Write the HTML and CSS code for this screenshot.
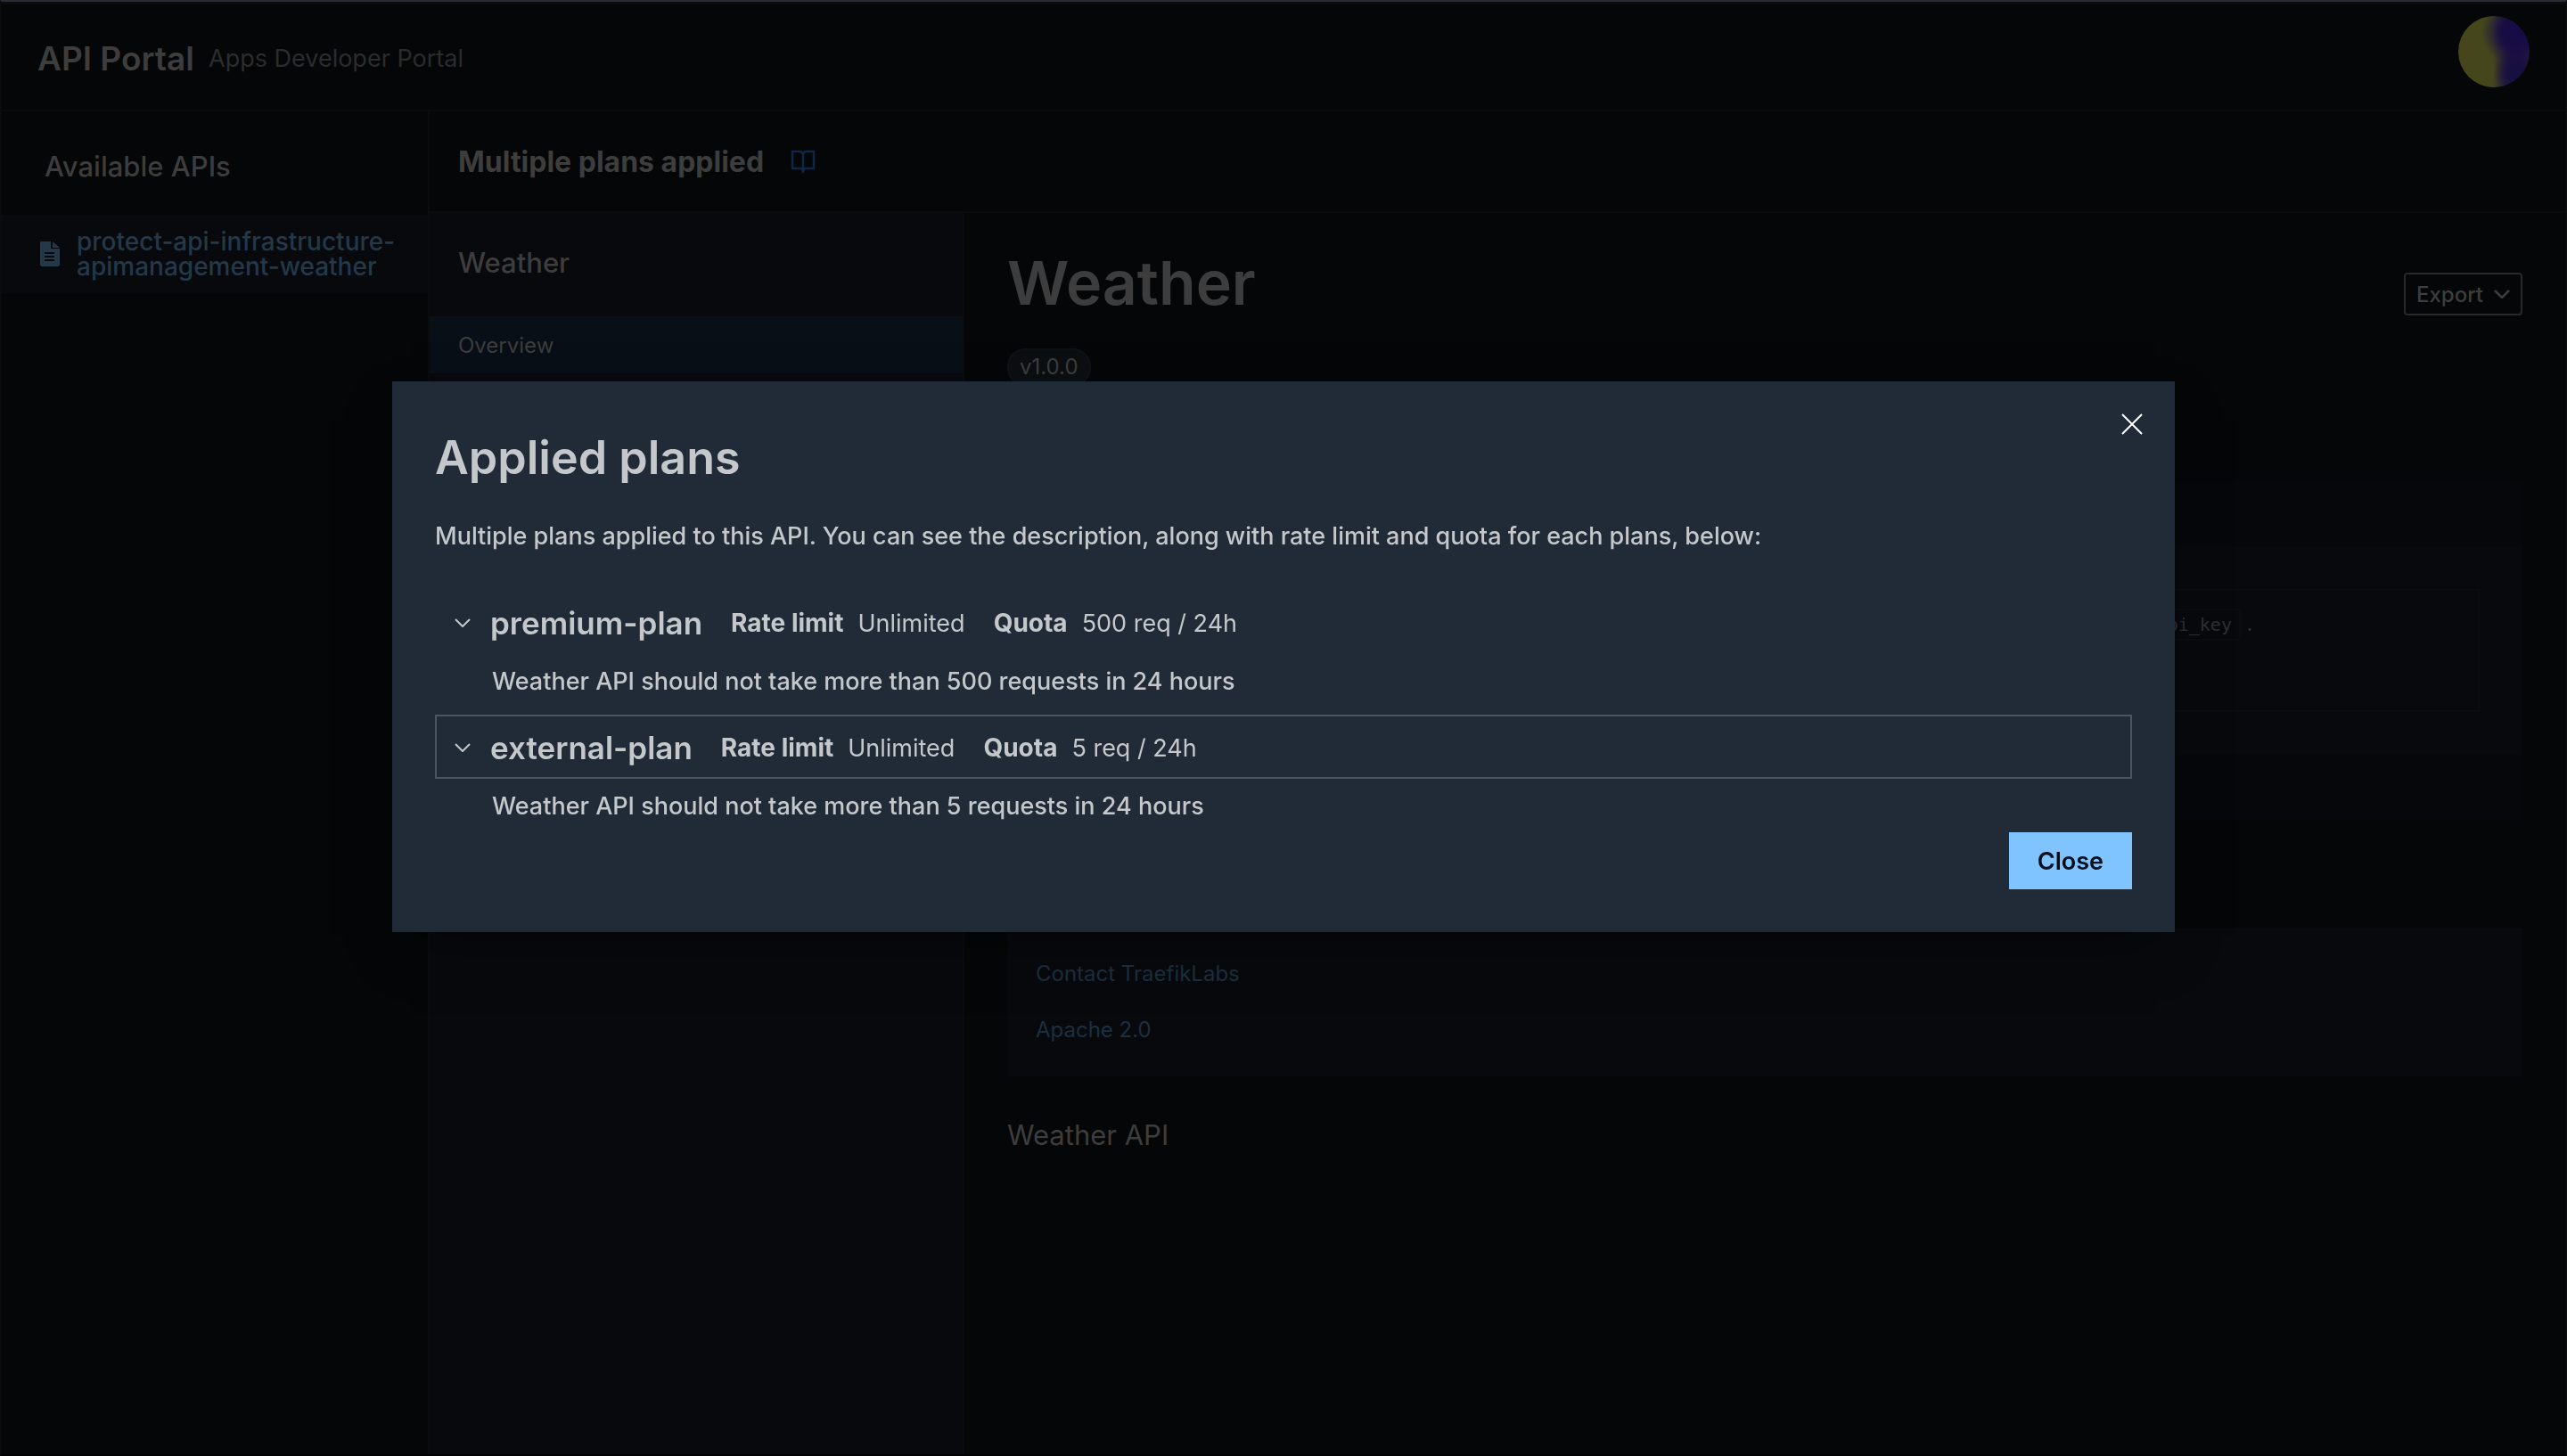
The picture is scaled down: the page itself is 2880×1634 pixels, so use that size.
FILE: index.html
```html
<!DOCTYPE html>
<html lang="en">
<head>
<meta charset="utf-8">
<title>API Portal</title>
<link rel="stylesheet" href="styles.css">
</head>
<body>
<div class="portal">
  <header class="topbar">
    <h1 class="brand">API Portal</h1>
    <p class="tagline">Apps Developer Portal</p>
    <button class="avatar" type="button" aria-label="Account"></button>
  </header>
  <div class="body">
    <nav class="apis" aria-label="Available APIs">
      <h2 class="apis-title">Available APIs</h2>
      <a class="api-link" href="#weather">
        <svg class="file-icon" viewBox="0 0 24 28" aria-hidden="true"><path fill="currentColor" fill-rule="evenodd" d="M2 0H13V8H23V26Q23 28 21 28H3Q1 28 1 26V1Q1 0 2 0ZM15 0L23 7H15ZM6 12V14H17V12ZM6 16V18H17V16ZM6 20V22H17V20Z"/></svg>
        <span>protect-api-infrastructure-apimanagement-weather</span>
      </a>
    </nav>
    <div class="content">
      <div class="planbar">
        <h2 class="planbar-title">Multiple plans applied</h2>
        <button class="book-button" type="button" aria-label="Show plans">
          <svg class="book-icon" viewBox="0 0 28 28" aria-hidden="true"><path d="M14 6Q13 3 10 3H2V22H11Q14 22 14 26Q14 22 17 22H26V3H18Q15 3 14 6V24" fill="none" stroke="currentColor" stroke-width="2.5" stroke-linejoin="round"/></svg>
        </button>
      </div>
      <div class="docs">
        <nav class="toc" aria-label="Weather">
          <h3 class="toc-title">Weather</h3>
          <a class="toc-link" href="#overview">Overview</a>
        </nav>
        <main class="doc" id="weather">
          <div class="doc-head">
            <h2 class="doc-title">Weather</h2>
            <button class="export" type="button">Export
              <svg class="export-icon" viewBox="0 0 18 10" aria-hidden="true"><path d="M1 1L9 9L17 1" fill="none" stroke="currentColor" stroke-width="2.5"/></svg>
            </button>
          </div>
          <span class="version">v1.0.0</span>
          <section class="security">
            <div class="security-body">
              <div class="security-box"><code>api_key</code>.</div>
            </div>
          </section>
          <section class="links">
            <a href="#contact">Contact TraefikLabs</a>
            <a href="#license">Apache 2.0</a>
          </section>
          <p class="summary">Weather API</p>
        </main>
      </div>
    </div>
  </div>
</div>
<div class="overlay">
  <section class="dialog" role="dialog" aria-modal="true" aria-labelledby="dialog-title">
    <button class="dismiss" type="button" aria-label="Dismiss">
      <svg class="dismiss-icon" viewBox="0 0 24 24" aria-hidden="true"><path d="M1 1L23 23M23 1L1 23" fill="none" stroke="currentColor" stroke-width="2"/></svg>
    </button>
    <h2 class="dialog-title" id="dialog-title">Applied plans</h2>
    <p class="intro">Multiple plans applied to this API. You can see the description, along with rate limit and quota for each plans, below:</p>
    <button class="plan" type="button" aria-expanded="true">
      <svg class="chevron" viewBox="0 0 18 10" aria-hidden="true"><path d="M1 1L9 9L17 1" fill="none" stroke="currentColor" stroke-width="2"/></svg>
      <span class="plan-name">premium-plan</span>
      <span class="fact"><b>Rate limit</b><span>Unlimited</span></span>
      <span class="fact"><b>Quota</b><span>500 req / 24h</span></span>
    </button>
    <p class="plan-text">Weather API should not take more than 500 requests in 24 hours</p>
    <button class="plan plan-focused" type="button" aria-expanded="true">
      <svg class="chevron" viewBox="0 0 18 10" aria-hidden="true"><path d="M1 1L9 9L17 1" fill="none" stroke="currentColor" stroke-width="2"/></svg>
      <span class="plan-name">external-plan</span>
      <span class="fact"><b>Rate limit</b><span>Unlimited</span></span>
      <span class="fact"><b>Quota</b><span>5 req / 24h</span></span>
    </button>
    <p class="plan-text plan-text-last">Weather API should not take more than 5 requests in 24 hours</p>
    <button class="close" type="button">Close</button>
  </section>
</div>
</body>
</html>
```

FILE: styles.css
```css
* { box-sizing: border-box; }

body {
  margin: 0;
  background: #050607;
  color: #3d3d3d;
  font-family: Inter, "Liberation Sans", sans-serif;
  font-size: 27px;
}

h1, h2, h3, p { margin: 0; }

button {
  padding: 0;
  border: 0;
  background: none;
  color: inherit;
  font: inherit;
}

a { color: #1c2f3e; text-decoration: none; }

svg { display: block; flex: none; }

.portal {
  display: flex;
  flex-direction: column;
  min-height: 100vh;
  border: 2px solid #0a0b0d;
  border-top: 2px solid #2c2b38;
  border-bottom-color: #020204;
}

.topbar {
  display: flex;
  align-items: center;
  gap: 16px;
  height: 123px;
  padding: 2px 40px 0;
  border-top: 3px solid #0b0b10;
  border-bottom: 2px solid #0a0b0d;
}

.brand { font-size: 37px; font-weight: 600; }

.tagline { color: #2b2c2d; }

.avatar {
  align-self: flex-start;
  width: 80px;
  height: 80px;
  margin: 11px 0 0 auto;
  border-radius: 50%;
  background:
    radial-gradient(ellipse 40px 38px at 66px 18px, #170c45 40%, #170c4500),
    radial-gradient(ellipse 26px 28px at 66px 64px, #170f3f 30%, #170f3f00),
    linear-gradient(90deg, #45461c 48%, #1d1240 74%, #2c1b3c);
}

.body { display: flex; flex: 1; }

.apis { flex: none; width: 480px; border-right: 2px solid #0a0b0d; }

.apis-title {
  padding: 42px 48px 34px;
  font-size: 31px;
  font-weight: 500;
  line-height: 40px;
}

.api-link {
  display: flex;
  align-items: center;
  gap: 18px;
  min-height: 88px;
  padding: 0 16px 0 42px;
  background: #08090d;
  color: #233849;
  font-size: 28px;
  font-weight: 500;
  line-height: 28px;
}

.file-icon { width: 24px; height: 28px; }

.content { display: flex; flex: 1; flex-direction: column; min-width: 0; }

.planbar {
  display: flex;
  align-items: center;
  gap: 30px;
  height: 114px;
  padding: 0 32px;
  border-bottom: 2px solid #0a0b0d;
}

.planbar-title { font-size: 32px; font-weight: 700; }

.book-button { color: #0f2747; }

.book-icon { width: 28px; height: 28px; }

.docs { display: flex; flex: 1; }

.toc {
  flex: none;
  width: 600px;
  border-right: 2px solid #0a0b0d;
  background: #08090d;
}

.toc-title {
  padding: 36px 32px 40px;
  font-size: 31px;
  font-weight: 500;
  line-height: 40px;
}

.toc-link {
  display: block;
  padding: 2px 32px 0;
  background: #080f16;
  color: #3d3d3d;
  font-size: 24px;
  line-height: 62px;
}

.doc { flex: 1; padding: 32px 48px; }

.doc-head { display: flex; align-items: center; justify-content: space-between; }

.doc-title { font-size: 68px; font-weight: 600; line-height: 92px; }

.export {
  display: flex;
  align-items: center;
  gap: 12px;
  height: 48px;
  margin-top: 26px;
  padding: 0 12px;
  border: 2px solid #272829;
  border-radius: 4px;
  font-size: 24px;
  font-weight: 500;
}

.export-icon { width: 18px; height: 10px; }

.version {
  display: inline-block;
  margin-top: 28px;
  padding: 0 12px;
  border: 2px solid #0f1214;
  border-radius: 20px;
  background: #0b0f11;
  font-size: 24px;
  line-height: 38px;
}

.security { margin-top: 108px; padding: 72px 0; background: #06070a; }

.security-body { padding: 48px; background: #08090d; }

.security-box {
  height: 138px;
  padding: 18px 250px 0 0;
  border: 2px solid #0b0c0f;
  color: #2f3031;
  font-family: "DejaVu Sans Mono", monospace;
  font-size: 20px;
  line-height: 40px;
  text-align: right;
}

.security-box code {
  margin-right: 4px;
  padding: 4px 8px;
  border: 2px solid #0b0c0f;
  border-radius: 4px;
  font: inherit;
}

.links {
  display: flex;
  flex-direction: column;
  gap: 31px;
  margin-top: 122px;
  padding: 36px 32px;
  background: #08090d;
  font-size: 24px;
  line-height: 32px;
}

.summary { margin-top: 46px; font-size: 31px; line-height: 40px; }

.overlay {
  position: fixed;
  inset: 0;
  display: flex;
  justify-content: center;
  align-items: flex-start;
  padding-top: 428px;
}

.dialog {
  position: relative;
  display: flex;
  flex-direction: column;
  width: 2000px;
  max-width: 90vw;
  padding: 48px;
  background: #202b37;
  box-shadow: 0 24px 60px -20px #00000080;
  color: #c5c8cb;
}

.dismiss { position: absolute; top: 36px; right: 36px; color: #ffffff; }

.dismiss-icon { width: 24px; height: 24px; }

.dialog-title { font-size: 52px; font-weight: 600; line-height: 76px; }

.intro { margin: 30px 0 40px; font-weight: 500; line-height: 40px; }

.plan {
  display: flex;
  align-items: center;
  gap: 32px;
  height: 72px;
  padding: 2px 20px 0;
  border: 2px solid transparent;
  text-align: left;
}

.plan-focused { border-color: #4c5660; }

.chevron { width: 18px; height: 10px; margin-right: -10px; }

.plan-name { font-size: 35px; font-weight: 600; }

.fact { display: flex; align-items: baseline; gap: 16px; }

.fact b { font-size: 28px; }

.plan-text {
  padding: 0 0 6px 64px;
  font-weight: 500;
  line-height: 62px;
}

.plan-text-last { padding-bottom: 0; }

.close {
  align-self: flex-end;
  height: 64px;
  margin-top: -2px;
  padding: 0 32px;
  background: #7fc4ff;
  color: #03101c;
  font-weight: 600;
}
```
